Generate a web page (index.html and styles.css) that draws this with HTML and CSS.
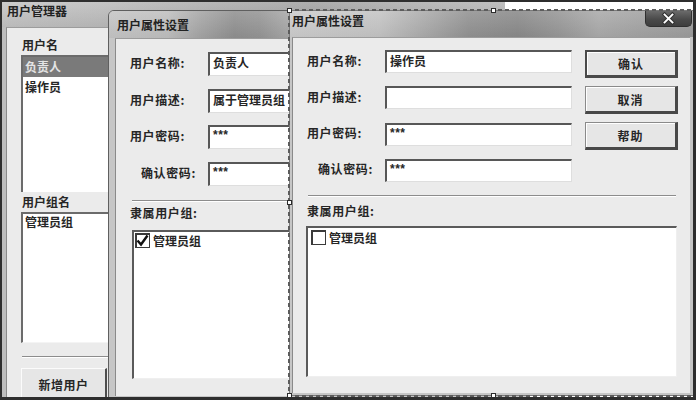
FILE: index.html
```html
<!DOCTYPE html>
<html lang="zh-CN">
<head>
<meta charset="utf-8">
<title>用户管理器</title>
<link rel="stylesheet" href="styles.css">
</head>
<body>
<div class="desk">

  <section class="win win-main">
    <header class="title title-main">用户管理器</header>
    <div class="panel panel-main">
      <div class="lb-head">用户名</div>
      <ul class="listbox lb-users">
        <li class="sel">负责人</li>
        <li>操作员</li>
      </ul>
      <div class="lb-head lb-head2">用户组名</div>
      <ul class="listbox lb-groups">
        <li>管理员组</li>
      </ul>
      <div class="sep sep-main"></div>
      <button class="btn btn-add" type="button">新增用户</button>
    </div>
  </section>

  <section class="win dlg dlg-back">
    <header class="title title-back">用户属性设置</header>
    <div class="panel dlg-panel">
      <div class="form">
        <span class="lbl">用户名称:</span><div class="field">负责人</div>
        <span class="lbl">用户描述:</span><div class="field">属于管理员组</div>
        <span class="lbl">用户密码:</span><div class="field pw">***</div>
        <span class="lbl lbl-in">确认密码:</span><div class="field pw">***</div>
      </div>
      <div class="sep sep-dlg"></div>
      <div class="group-label">隶属用户组:</div>
      <div class="checklist">
        <div class="check-item">
          <span class="cb"><svg viewBox="0 0 15 15" width="15" height="15"><path d="M2.5 7.5 L6 11.5 L12.5 2.5" fill="none" stroke="#111" stroke-width="2.4"/></svg></span>
          <span>管理员组</span>
        </div>
      </div>
    </div>
  </section>

  <section class="win dlg dlg-front">
    <header class="title title-front">用户属性设置</header>
    <button class="close" type="button" aria-label="关闭">
      <svg viewBox="0 0 46 16" width="46" height="16">
        <path d="M19 3.5 L27 11.5 M27 3.5 L19 11.5" stroke="#333" stroke-width="4" stroke-linecap="square"/>
        <path d="M19 3.5 L27 11.5 M27 3.5 L19 11.5" stroke="#fff" stroke-width="2" stroke-linecap="square"/>
      </svg>
    </button>
    <div class="panel dlg-panel">
      <div class="top-row">
        <div class="form">
          <span class="lbl">用户名称:</span><div class="field">操作员</div>
          <span class="lbl">用户描述:</span><div class="field"></div>
          <span class="lbl">用户密码:</span><div class="field pw">***</div>
          <span class="lbl lbl-in">确认密码:</span><div class="field pw">***</div>
        </div>
        <div class="btn-col">
          <button class="btn btn-dlg btn-default" type="button">确认</button>
          <button class="btn btn-dlg" type="button">取消</button>
          <button class="btn btn-dlg" type="button">帮助</button>
        </div>
      </div>
      <div class="sep sep-dlg"></div>
      <div class="group-label">隶属用户组:</div>
      <div class="checklist">
        <div class="check-item">
          <span class="cb"></span>
          <span>管理员组</span>
        </div>
      </div>
    </div>
  </section>

  <div class="sel-frame">
    <span class="handle h-tl"></span>
    <span class="handle h-tm"></span>
    <span class="handle h-ml"></span>
    <span class="handle h-bl"></span>
    <span class="handle h-bm"></span>
  </div>
</div>
</body>
</html>
```

FILE: styles.css
```css
* { box-sizing: border-box; }

body {
  margin: 0;
  font-family: "Noto Sans CJK SC", "Liberation Sans", sans-serif;
  font-size: 12px;
  font-weight: 700;
  color: #262626;
}

.desk {
  position: relative;
  width: 696px;
  height: 400px;
  overflow: hidden;
  background: #ffffff;
}

.desk::after {
  content: "";
  position: absolute;
  inset: 0;
  border-style: solid;
  border-color: #2e2e2e;
  border-width: 2px 3px 3px 2px;
  z-index: 20;
  pointer-events: none;
}

.win {
  position: absolute;
  display: flex;
  flex-direction: column;
}

.title {
  flex: none;
  white-space: nowrap;
  color: #222222;
}

/* ---------- main window ---------- */
.win-main {
  left: 0;
  top: 0;
  width: 505px;
  height: 400px;
  background: #bdbdbd;
  z-index: 1;
}

.title-main {
  height: 27px;
  padding: 3px 0 0 7px;
  line-height: 16px;
  background:
    linear-gradient(180deg, rgba(255,255,255,0.18), rgba(0,0,0,0.04)),
    linear-gradient(90deg, #c2c2c2 0%, #bababa 20%, #a7a7a7 45%, #9e9e9e 62%, #aaaaaa 80%, #b4b4b4 100%);
}

.panel-main {
  flex: 1;
  margin-left: 6px;
  background: #ebebeb;
  border-left: 1px solid #8a8a8a;
  border-top: 1px solid #9c9c9c;
  padding: 8px 0 0 14px;
  display: flex;
  flex-direction: column;
}

.lb-head {
  height: 19px;
  line-height: 18px;
  padding-left: 1px;
}

.lb-head2 {
  height: 20px;
  line-height: 20px;
}

.listbox {
  list-style: none;
  margin: 0;
  padding: 0;
  width: 110px;
  background: #ffffff;
  border-top: 2px solid #6b6b6b;
  border-left: 2px solid #6b6b6b;
}

.listbox li {
  height: 20px;
  line-height: 20px;
  padding-left: 2px;
}

.lb-users { height: 137px; }
.lb-groups { height: 131px; border-bottom: 1px solid #f4f4f4; }
.lb-groups li { height: 16px; line-height: 16px; }

.listbox li.sel {
  background: #7a7a7a;
  color: #e4e4e4;
}

.sep {
  height: 2px;
  border-top: 1px solid #8c8c8c;
  border-bottom: 1px solid #ffffff;
}

.sep-main {
  width: 110px;
  margin: 13px 0 0 1px;
}

.btn {
  font: inherit;
  color: #262626;
  background: #e6e6e6;
  border-style: solid;
  border-color: #fbfbfb #4e4e4e #4e4e4e #fbfbfb;
  border-width: 1px 2px 2px 1px;
  padding: 0;
  margin: 0;
}

.btn-add {
  width: 86px;
  height: 34px;
  margin-top: 10px;
  letter-spacing: 0.5px;
}

/* ---------- dialogs ---------- */
.dlg {
  top: 10px;
  background: #c6c6c6;
  border: 1px solid #5f5f5f;
}

.dlg-back {
  left: 108px;
  width: 420px;
  height: 392px;
  border-radius: 6px 6px 0 0;
  z-index: 2;
}

.title-back {
  height: 27px;
  line-height: 27px;
  padding-left: 8px;
  border-radius: 5px 5px 0 0;
  background:
    linear-gradient(180deg, rgba(255,255,255,0.15), rgba(0,0,0,0.03)),
    linear-gradient(90deg, #c3c3c3 0%, #bdbdbd 14%, #a3a3a3 22%, #8e8e8e 30%, #939393 36%, #a9a9a9 44%, #b4b4b4 60%, #aaaaaa 100%);
}

.dlg-front {
  left: 289px;
  width: 408px;
  height: 386px;
  border-color: #7a7a7a;
  z-index: 3;
}

.title-front {
  height: 26px;
  line-height: 20px;
  padding-left: 2px;
  background:
    linear-gradient(180deg, rgba(255,255,255,0.12), rgba(0,0,0,0.04)),
    linear-gradient(90deg, #cccccc 0%, #c4c4c4 22%, #a9a9a9 34%, #929292 44%, #8a8a8a 56%, #979797 66%, #aaaaaa 76%, #a3a3a3 86%, #9b9b9b 100%);
}

.close {
  position: absolute;
  top: 0;
  right: 4px;
  width: 47px;
  height: 16px;
  padding: 0;
  border: 1px solid #2f2f2f;
  border-top: none;
  border-radius: 0 0 5px 5px;
  background: linear-gradient(180deg, #6a6a6a 0%, #4a4a4a 55%, #3e3e3e 100%);
  display: flex;
  align-items: center;
  justify-content: center;
}

.close svg { display: block; }

.dlg-panel {
  flex: 1;
  background: #ebebeb;
  border-left: 1px solid #8a8a8a;
  border-top: 1px solid #9c9c9c;
  display: flex;
  flex-direction: column;
  align-items: flex-start;
}

.dlg-back .dlg-panel {
  margin: 0 6px 5px 6px;
  padding: 13px 0 0 14px;
}

.dlg-front .dlg-panel {
  margin: 0 6px 2px 2px;
  padding: 12px 0 0 14px;
}

.top-row {
  display: flex;
  align-items: flex-start;
}

.form {
  display: grid;
  grid-template-columns: 78px 187px;
  align-items: center;
}

.dlg-back .form {
  grid-template-rows: repeat(4, 24px);
  row-gap: 12.6px;
}

.dlg-front .form {
  grid-template-rows: repeat(4, 23px);
  row-gap: 13.3px;
}

.lbl {
  white-space: nowrap;
  letter-spacing: 0.6px;
  margin-top: -3px;
}

.lbl-in { padding-left: 11px; }

.field {
  height: 100%;
  background: #ffffff;
  border-style: solid;
  border-color: #575757 #dedede #dedede #575757;
  border-width: 2px 1px 1px 2px;
  padding: 0 0 0 3px;
  line-height: 17px;
  white-space: nowrap;
  overflow: hidden;
}

.pw {
  font-family: "Liberation Sans", sans-serif;
  font-weight: 700;
  font-size: 12px;
  line-height: 16px;
  letter-spacing: 0.5px;
}

.btn-col {
  display: flex;
  flex-direction: column;
  gap: 8px;
  margin-left: 13px;
}

.btn-dlg {
  width: 93px;
  height: 28px;
  border-color: #8a8a8a #484848 #484848 #8a8a8a;
  border-width: 1px 3px 3px 1px;
  box-shadow: inset 1px 1px 0 #ffffff;
  letter-spacing: 1px;
}

.btn-default {
  border-color: #4a4a4a;
  border-width: 2px 3px 3px 2px;
}

.dlg-back .sep-dlg { width: 300px; margin: 14px 0 0 2px; }
.dlg-front .sep-dlg { width: 368px; margin: 13px 0 0 1px; }

.group-label {
  line-height: 14px;
  letter-spacing: 0.6px;
}

.dlg-back .group-label { margin-top: 4px; }
.dlg-front .group-label { margin-top: 7px; }

.checklist {
  background: #ffffff;
  border-style: solid;
  border-color: #5a5a5a #efefef #efefef #5a5a5a;
  border-width: 2px 1px 1px 2px;
}

.dlg-back .checklist {
  width: 300px;
  height: 149px;
  margin: 10px 0 0 2px;
  padding: 1px 0 0 1px;
}

.dlg-front .checklist {
  width: 371px;
  height: 151px;
  margin: 8px 0 0 -1px;
  padding: 2px 0 0 3px;
}

.check-item {
  display: flex;
  align-items: center;
  gap: 3px;
  height: 16px;
  line-height: 16px;
}

.cb {
  width: 15px;
  height: 15px;
  background: #ffffff;
  border: 1px solid #3a3a3a;
  border-width: 2px 1px 1px 2px;
  flex: none;
  position: relative;
}

.cb svg {
  position: absolute;
  left: -2px;
  top: -2px;
}

/* ---------- selection frame ---------- */
.sel-frame {
  position: absolute;
  left: 288px;
  top: 9px;
  width: 412px;
  height: 388px;
  z-index: 5;
  pointer-events: none;
  background:
    repeating-linear-gradient(90deg, #5c5c5c 0 4px, transparent 4px 7px) top left / 100% 2px no-repeat,
    repeating-linear-gradient(90deg, #5c5c5c 0 4px, transparent 4px 7px) bottom left / 100% 2px no-repeat,
    repeating-linear-gradient(180deg, #5c5c5c 0 4px, transparent 4px 7px) top left / 2px 100% no-repeat;
}

.handle {
  position: absolute;
  width: 5px;
  height: 5px;
  background: #ffffff;
  border: 1px solid #2c2c2c;
}

.h-tl { left: -1px; top: -1px; }
.h-tm { left: 203px; top: -1px; }
.h-ml { left: -1px; top: 191px; }
.h-bl { left: -1px; top: 384px; }
.h-bm { left: 203px; top: 384px; }
```
